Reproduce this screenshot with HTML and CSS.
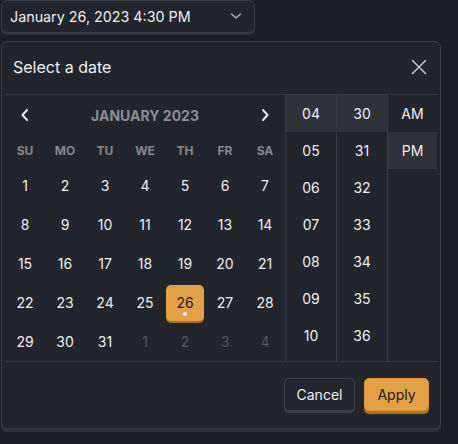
FILE: index.html
```html
<!DOCTYPE html>
<html>
<head>
<meta charset="utf-8">
<link rel="stylesheet" href="styles.css">
</head>
<body>
<div class="trigger">
  <span class="trigger-text">January 26, 2023 4:30 PM</span>
  <svg class="chev" width="12" height="8" viewBox="0 0 12 8"><path d="M1.5 2 L6 6 L10.5 2" fill="none" stroke="#a9acb1" stroke-width="1.6" stroke-linecap="round" stroke-linejoin="round"/></svg>
</div>
<div class="popover">
  <div class="header">
    <span class="title">Select a date</span>
    <svg class="close" width="16" height="16" viewBox="0 0 16 16"><path d="M1.5 1.5 L14.5 14.5 M14.5 1.5 L1.5 14.5" stroke="#c4c6ca" stroke-width="1.5" stroke-linecap="round"/></svg>
  </div>
  <div class="body">
    <div class="calendar">
      <div class="nav">
        <svg class="arrow" width="10" height="14" viewBox="0 0 10 14"><path d="M7 2 L2.5 7 L7 12" fill="none" stroke="#e8e8ea" stroke-width="2" stroke-linecap="round" stroke-linejoin="round"/></svg>
        <span class="month">JANUARY 2023</span>
        <svg class="arrow" width="10" height="14" viewBox="0 0 10 14"><path d="M3 2 L7.5 7 L3 12" fill="none" stroke="#e8e8ea" stroke-width="2" stroke-linecap="round" stroke-linejoin="round"/></svg>
      </div>
      <div class="weekdays">
        <span>SU</span><span>MO</span><span>TU</span><span>WE</span><span>TH</span><span>FR</span><span>SA</span>
      </div>
      <div class="days">
        <span class="day">1</span><span class="day">2</span><span class="day">3</span><span class="day">4</span><span class="day">5</span><span class="day">6</span><span class="day">7</span>
        <span class="day">8</span><span class="day">9</span><span class="day">10</span><span class="day">11</span><span class="day">12</span><span class="day">13</span><span class="day">14</span>
        <span class="day">15</span><span class="day">16</span><span class="day">17</span><span class="day">18</span><span class="day">19</span><span class="day">20</span><span class="day">21</span>
        <span class="day">22</span><span class="day">23</span><span class="day">24</span><span class="day">25</span><span class="day"><span class="selected">26<i class="dot"></i></span></span><span class="day">27</span><span class="day">28</span>
        <span class="day">29</span><span class="day">30</span><span class="day">31</span><span class="day out">1</span><span class="day out">2</span><span class="day out">3</span><span class="day out">4</span>
      </div>
    </div>
    <div class="col">
      <span class="cell active">04</span><span class="cell">05</span><span class="cell">06</span><span class="cell">07</span><span class="cell">08</span><span class="cell">09</span><span class="cell">10</span>
    </div>
    <div class="col">
      <span class="cell active">30</span><span class="cell">31</span><span class="cell">32</span><span class="cell">33</span><span class="cell">34</span><span class="cell">35</span><span class="cell">36</span>
    </div>
    <div class="col ampm">
      <span class="cell">AM</span><span class="cell active">PM</span>
    </div>
  </div>
  <div class="footer">
    <button class="btn cancel">Cancel</button>
    <button class="btn apply">Apply</button>
  </div>
</div>
</body>
</html>
```
FILE: styles.css
```css
* { box-sizing: border-box; }
html, body { margin: 0; padding: 0; }
body {
  background: #1c1e23;
  font-family: Inter, "Noto Sans", sans-serif;
  color: #e8e8ea;
  width: 458px;
  height: 444px;
  overflow: hidden;
}
.trigger {
  margin-left: 1px;
  width: 254px;
  height: 33px;
  background: #22252b;
  border: 1px solid #3a3d44;
  border-radius: 6px;
  box-shadow: 0 2px 0 #30333a;
  display: flex;
  align-items: center;
  justify-content: space-between;
  padding: 0 12px 0 8px;
  font-size: 14.3px;
  color: #eeeef0;
}
.chev { margin-top: -1px; }
.popover {
  margin-top: 8px;
  margin-left: 1px;
  width: 440px;
  height: 388px;
  background: #22252b;
  border: 1px solid #3a3d44;
  border-radius: 6px;
  box-shadow: 0 3px 0 #30333a;
  padding: 0 3px;
  display: flex;
  flex-direction: column;
}
.header {
  flex: 0 0 53px;
  height: 53px;
  display: flex;
  align-items: center;
  justify-content: space-between;
  padding: 0 10px 3px 8px;
  border-bottom: 1px solid #383b42;
}
.title { font-size: 16px; color: #eeeef0; }
.body {
  display: flex;
  flex: 0 0 267px;
  height: 267px;
  border-bottom: 1px solid #383b42;
}
.calendar { width: 280px; }
.nav {
  height: 40px;
  display: flex;
  align-items: center;
  justify-content: space-between;
  padding: 0 15px 0 15px;
}
.month { font-size: 14px; font-weight: 700; color: #8a8d93; }
.weekdays {
  height: 31px;
  display: grid;
  grid-template-columns: repeat(7, 40px);
  align-items: center;
  justify-items: center;
  font-size: 12px;
  font-weight: 700;
  color: #85888e;
}
.days {
  display: grid;
  grid-template-columns: repeat(7, 40px);
  grid-auto-rows: 39px;
  align-items: center;
  justify-items: center;
  font-size: 14px;
  color: #eeeef0;
}
.day { display: flex; align-items: center; justify-content: center; width: 40px; height: 39px; }
.day.out { color: #54575d; }
.selected {
  position: relative;
  width: 38px;
  height: 36px;
  margin-top: 1px;
  background: #e2a144;
  border-radius: 5px;
  box-shadow: 0 2px 0 #a9732c;
  color: #1c1c1e;
  display: flex;
  align-items: center;
  justify-content: center;
  padding-bottom: 2px;
}
.dot {
  position: absolute;
  width: 4px;
  height: 4px;
  border-radius: 50%;
  background: #ffffff;
  left: 17px;
  bottom: 5px;
}
.col {
  width: 51px;
  border-left: 1px solid #383b42;
  display: flex;
  flex-direction: column;
  overflow: hidden;
  font-size: 14px;
}
.col.ampm { width: 50px; }
.cell {
  flex: 0 0 37px;
  height: 37px;
  display: flex;
  align-items: center;
  justify-content: center;
  color: #eeeef0;
}
.cell.active { background: #2f3239; }
.footer {
  flex: 1;
  display: flex;
  justify-content: flex-end;
  align-items: flex-start;
  gap: 9px;
  padding: 16px 8px 0 0;
}
.btn {
  font-family: Inter, "Noto Sans", sans-serif;
  font-size: 14px;
  height: 33px;
  border-radius: 5px;
  cursor: pointer;
}
.cancel {
  width: 71px;
  background: #23262c;
  color: #eeeef0;
  border: 1px solid #3e4148;
  box-shadow: 0 2px 0 #3a3d43;
}
.apply {
  width: 65px;
  background: #e2a144;
  color: #1c1c1e;
  border: 1px solid #d69838;
  box-shadow: 0 3px 0 #a9732c;
}
```
